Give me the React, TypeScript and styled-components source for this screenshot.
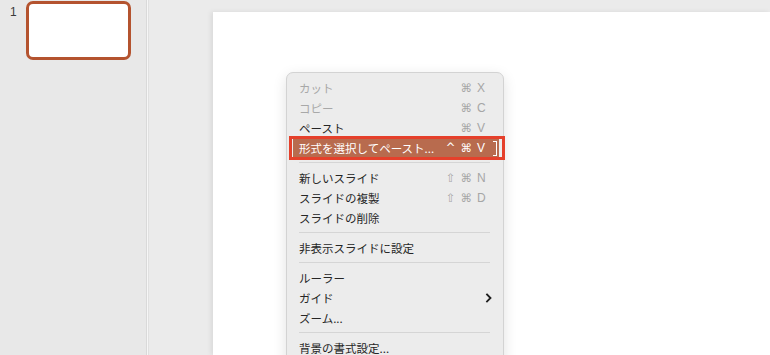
import React from 'react';
import styled, { createGlobalStyle } from 'styled-components';

const GlobalStyle = createGlobalStyle`
  html, body {
    margin: 0;
    padding: 0;
    width: 770px;
    height: 355px;
    overflow: hidden;
  }
  body {
    font-family: "Noto Sans CJK JP", "Liberation Sans", sans-serif;
  }
`;

const Window = styled.div`
  position: relative;
  display: flex;
  width: 770px;
  height: 355px;
  background: #e9e9e9;
  overflow: hidden;
`;

const Sidebar = styled.div`
  display: flex;
  align-items: flex-start;
  gap: 8px;
  width: 146px;
  padding: 1px 0 0 10px;
  box-sizing: border-box;
  background: #e8e8e8;
`;

const SlideNumber = styled.div`
  font-family: "Liberation Sans", sans-serif;
  font-size: 12px;
  color: #3a3a3a;
  margin-top: 4px;
  width: 8px;
`;

const Thumb = styled.div`
  width: 105px;
  height: 59px;
  box-sizing: border-box;
  border: 3px solid #b4532f;
  border-radius: 7px;
  background: #ffffff;
`;

const Divider = styled.div`
  width: 3px;
  border-left: 1px solid #d9d9d9;
  background: #f6f6f6;
  border-right: 1px solid #e0e0e0;
  box-sizing: border-box;
`;

const Stage = styled.div`
  flex: 1;
  display: flex;
  padding: 12px 0 0 64px;
  background: #ebebeb;
`;

const Slide = styled.div`
  flex: 1;
  background: #ffffff;
  box-shadow: -2px 0 5px rgba(0, 0, 0, 0.08);
`;

const Menu = styled.div`
  position: absolute;
  left: 286px;
  top: 72px;
  width: 218px;
  height: 300px;
  box-sizing: border-box;
  padding: 5px 0 0;
  background: #ececec;
  border: 1px solid #d3d3d3;
  border-radius: 7px;
  box-shadow: 0 4px 14px rgba(0, 0, 0, 0.12);
`;

const Row = styled.div<{ $disabled?: boolean; $active?: boolean }>`
  position: relative;
  display: flex;
  align-items: center;
  justify-content: space-between;
  height: 20px;
  margin: 0 4px 0 6px;
  padding: 0 12px 0 6px;
  font-size: 11.5px;
  color: ${(p) => (p.$active ? '#ffffff' : p.$disabled ? '#a8a8a8' : '#262626')};
  background: ${(p) => (p.$active ? '#b86b4e' : 'transparent')};
`;

const Shortcut = styled.span<{ $active?: boolean }>`
  display: flex;
  align-items: center;
  gap: 5px;
  font-family: "DejaVu Sans", "Liberation Sans", sans-serif;
  font-size: 11.5px;
  color: ${(p) => (p.$active ? '#ffffff' : '#a6a6a6')};
`;

const Key = styled.span`
  display: inline-block;
  width: 10px;
  font-family: "Liberation Sans", sans-serif;
  font-size: 12px;
`;

const SubArrow = styled.svg`
  margin-right: -6px;
`;

const Separator = styled.div`
  height: 1px;
  margin: 4px 13px 5px 12px;
  background: #d5d5d5;
`;

const Annotation = styled.div`
  position: absolute;
  left: -4px;
  right: -6px;
  top: -2px;
  bottom: -2px;
  border: 3px solid #e5402b;
  pointer-events: none;
`;

const Bracket = styled.div`
  position: absolute;
  right: 2px;
  top: 3px;
  width: 3px;
  height: 13px;
  border: 1px solid #ffffff;
  border-left: none;
`;

type Item =
  | { kind: 'sep' }
  | {
      kind: 'item';
      label: string;
      mods?: string[];
      key?: string;
      disabled?: boolean;
      active?: boolean;
      sub?: boolean;
    };

const items: Item[] = [
  { kind: 'item', label: 'カット', mods: ['⌘'], key: 'X', disabled: true },
  { kind: 'item', label: 'コピー', mods: ['⌘'], key: 'C', disabled: true },
  { kind: 'item', label: 'ペースト', mods: ['⌘'], key: 'V' },
  { kind: 'item', label: '形式を選択してペースト...', mods: ['^', '⌘'], key: 'V', active: true },
  { kind: 'sep' },
  { kind: 'item', label: '新しいスライド', mods: ['⇧', '⌘'], key: 'N' },
  { kind: 'item', label: 'スライドの複製', mods: ['⇧', '⌘'], key: 'D' },
  { kind: 'item', label: 'スライドの削除' },
  { kind: 'sep' },
  { kind: 'item', label: '非表示スライドに設定' },
  { kind: 'sep' },
  { kind: 'item', label: 'ルーラー' },
  { kind: 'item', label: 'ガイド', sub: true },
  { kind: 'item', label: 'ズーム...' },
  { kind: 'sep' },
  { kind: 'item', label: '背景の書式設定...' },
];

const Chevron = () => (
  <SubArrow width="8" height="10" viewBox="0 0 8 10">
    <path d="M2 1.5 L5.5 5 L2 8.5" fill="none" stroke="#1e1e1e" strokeWidth="1.8" strokeLinecap="square" />
  </SubArrow>
);

const App: React.FC = () => {
  return (
    <>
      <GlobalStyle />
      <Window>
        <Sidebar>
          <SlideNumber>1</SlideNumber>
          <Thumb />
        </Sidebar>
        <Divider />
        <Stage>
          <Slide />
        </Stage>
        <Menu>
          {items.map((it, i) =>
            it.kind === 'sep' ? (
              <Separator key={i} />
            ) : (
              <Row key={i} $disabled={it.disabled} $active={it.active}>
                <span>{it.label}</span>
                {it.key && (
                  <Shortcut $active={it.active}>
                    {it.mods?.map((m) => (
                      <span key={m}>{m}</span>
                    ))}
                    <Key>{it.key}</Key>
                  </Shortcut>
                )}
                {it.sub && <Chevron />}
                {it.active && (
                  <>
                    <Annotation />
                    <Bracket />
                  </>
                )}
              </Row>
            )
          )}
        </Menu>
      </Window>
    </>
  );
};

export default App;
